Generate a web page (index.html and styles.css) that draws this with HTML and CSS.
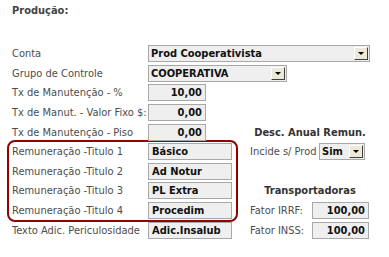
FILE: index.html
```html
<!DOCTYPE html>
<html lang="pt-BR">
<head>
  <meta charset="UTF-8">
  <title>Produção</title>
  <link rel="stylesheet" href="styles.css">
</head>
<body>
  <div class="title">Produção:</div>
  <div class="form">
    <div class="row wide">
      <label class="lbl">Conta</label>
      <div class="select sel-conta"><span class="val">Prod Cooperativista</span><span class="arrow"></span></div>
    </div>
    <div class="row wide">
      <label class="lbl">Grupo de Controle</label>
      <div class="select sel-grupo"><span class="val">COOPERATIVA</span><span class="arrow"></span></div>
    </div>

    <div class="cols">
      <div class="left">
        <div class="row">
          <label class="lbl">Tx de Manutenção - %</label>
          <input class="field num" type="text" value="10,00">
        </div>
        <div class="row">
          <label class="lbl">Tx de Manut. - Valor Fixo $:</label>
          <input class="field num" type="text" value="0,00">
        </div>
        <div class="row">
          <label class="lbl">Tx de Manutenção - Piso</label>
          <input class="field num" type="text" value="0,00">
        </div>
        <div class="titles-box">
          <div class="row">
            <label class="lbl">Remuneração -Titulo 1</label>
            <input class="field txt" type="text" value="Básico">
          </div>
          <div class="row">
            <label class="lbl">Remuneração -Titulo 2</label>
            <input class="field txt" type="text" value="Ad Notur">
          </div>
          <div class="row">
            <label class="lbl">Remuneração -Titulo 3</label>
            <input class="field txt" type="text" value="PL Extra">
          </div>
          <div class="row">
            <label class="lbl">Remuneração -Titulo 4</label>
            <input class="field txt" type="text" value="Procedim">
          </div>
        </div>
        <div class="row">
          <label class="lbl">Texto Adic. Periculosidade</label>
          <input class="field txt" type="text" value="Adic.Insalub">
        </div>
      </div>

      <div class="right">
        <div class="row"></div>
        <div class="row"></div>
        <div class="row head">Desc. Anual Remun.</div>
        <div class="row">
          <label class="rlbl">Incide s/ Prod</label>
          <div class="select sel-sim"><span class="val">Sim</span><span class="arrow"></span></div>
        </div>
        <div class="row"></div>
        <div class="row head">Transportadoras</div>
        <div class="row">
          <label class="rlbl fator">Fator IRRF:</label>
          <input class="field num fat" type="text" value="100,00">
        </div>
        <div class="row">
          <label class="rlbl fator">Fator INSS:</label>
          <input class="field num fat" type="text" value="100,00">
        </div>
      </div>
    </div>
  </div>
</body>
</html>
```

FILE: styles.css
```css
body {
  margin: 0;
  background: #fff;
  font-family: "DejaVu Sans Condensed", "DejaVu Sans", sans-serif;
  font-size: 11px;
  color: #4d4d4d;
}
.title {
  padding: 4px 0 0 12px;
  line-height: 14px;
  font-weight: bold;
  color: #444;
}
.form {
  margin-top: 26px;
  padding-left: 7px;
}
.row {
  height: 19.6px;
  display: flex;
  align-items: center;
}
.wide, .left > .row {
  padding-left: 5px;
}
.lbl {
  width: 136px;
  flex: none;
  white-space: nowrap;
}
.cols {
  display: flex;
}
.left {
  width: 231px;
}
.titles-box {
  border: 2px solid #960000;
  border-radius: 8px;
  margin: -2px 0;
}
.titles-box .row {
  padding-left: 3px;
}
.right {
  width: 120px;
  margin-left: 12px;
}
.head {
  justify-content: center;
  font-weight: bold;
  color: #333;
}
.rlbl {
  width: 69px;
  white-space: nowrap;
}
.rlbl.fator {
  width: 62px;
}
.field {
  box-sizing: border-box;
  height: 17px;
  margin: 0;
  padding: 0 3px;
  border: 1px solid #a8a8a8;
  background: #efefef;
  font-family: inherit;
  font-size: 11px;
  font-weight: bold;
  color: #111;
  outline: none;
}
.num {
  width: 58px;
  text-align: right;
}
.txt {
  width: 84px;
}
.fat {
  width: 57px;
}
.select {
  box-sizing: border-box;
  height: 17px;
  display: flex;
  align-items: center;
  justify-content: space-between;
  padding: 0 1px 0 2px;
  border: 1px solid #a8a8a8;
  background: #efefef;
  font-weight: bold;
  color: #111;
}
.sel-conta {
  width: 222px;
}
.sel-grupo {
  width: 139px;
}
.sel-sim {
  width: 46px;
}
.arrow {
  box-sizing: border-box;
  width: 14px;
  height: 13px;
  display: flex;
  align-items: center;
  justify-content: center;
  background: #ece9d8;
  border-top: 1px solid #fff;
  border-left: 1px solid #fff;
  border-right: 1px solid #404040;
  border-bottom: 1px solid #404040;
}
.arrow::before {
  content: "";
  border-left: 3px solid transparent;
  border-right: 3px solid transparent;
  border-top: 3px solid #000;
}
```
